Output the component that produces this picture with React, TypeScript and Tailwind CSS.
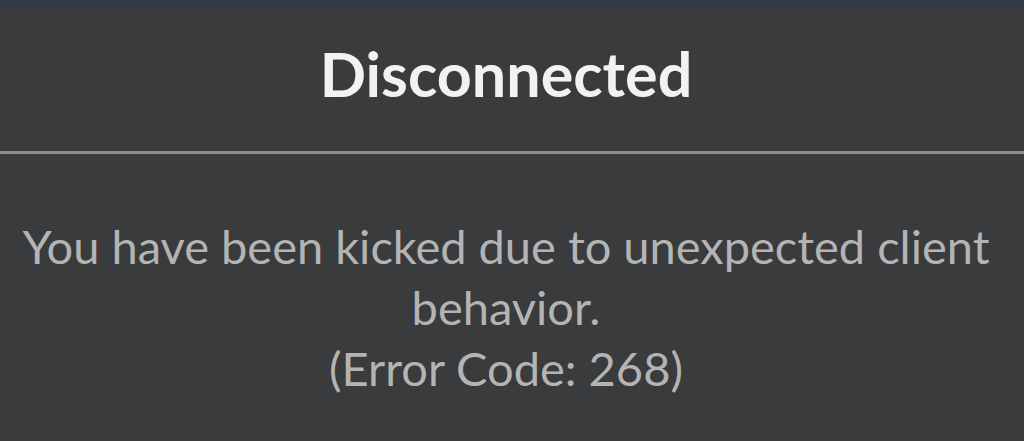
export default function App() {
  return (
    <div className="w-[1024px] h-[441px] bg-[#393b3d] flex flex-col overflow-hidden" style={{ fontFamily: 'Lato, "Noto Sans", sans-serif' }}>
      {/* полоска сверху */}
      <div className="h-[10px] bg-gradient-to-b from-[#313849] to-[#393b3d]"></div>

      <div className="h-[141px] pb-[14px] pr-[12px] flex items-center justify-center">
        <h1 className="text-[61px] font-bold text-[#f2f2f2] leading-none">Disconnected</h1>
      </div>

      <div className="h-[3px] bg-[#8e8e8e]"></div>

      <div className="pt-[62px] pl-[2px] pr-[14px] text-center text-[47px] leading-[61px] text-[#b4b4b4]">
        You have been kicked due to unexpected client behavior.
        <br />
        (Error Code: 268)
      </div>
    </div>
  );
}
